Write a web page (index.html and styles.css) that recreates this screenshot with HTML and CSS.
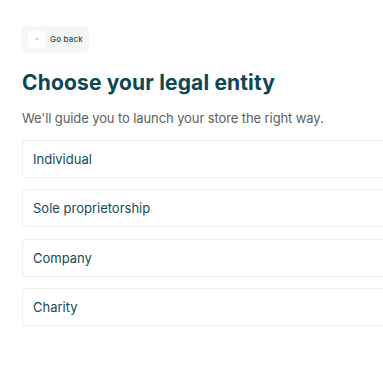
FILE: index.html
```html
<!DOCTYPE html>
<html lang="en">
<head>
  <meta charset="UTF-8">
  <title>Legal entity</title>
  <link rel="stylesheet" href="styles.css">
</head>
<body>
  <div class="page">
    <div class="back">
      <span class="back-icon">
        <svg width="6" height="4" viewBox="0 0 6 4"><path d="M1 3.2 L3 1.2 L5 3.2" fill="none" stroke="#9aa3a6" stroke-width="0.9"/></svg>
      </span>
      <span class="back-text">Go back</span>
    </div>
    <h1 class="title">Choose your legal entity</h1>
    <p class="desc">We'll guide you to launch your store the right way.</p>
    <div class="list">
      <div class="item">Individual</div>
      <div class="item">Sole proprietorship</div>
      <div class="item">Company</div>
      <div class="item">Charity</div>
    </div>
  </div>
</body>
</html>
```

FILE: styles.css
```css
*{margin: 0;box-sizing: border-box;}
body{
  font-family: Inter, "Noto Sans", sans-serif;
  background: #fff;
  overflow: hidden;
}
.page{
  padding: 25px 0 0 22px;
  width: 420px;
}
.back{
  display: inline-flex;
  align-items: center;
  gap: 5px;
  height: 27px;
  padding: 0 6px 0 6px;
  background: #f5f7f7;
  border-radius: 5px;
}
.back-icon{
  width: 17px;
  height: 17px;
  background: #fff;
  border-radius: 3px;
  display: flex;
  align-items: center;
  justify-content: center;
}
.back-text{
  font-size: 8px;
  font-weight: 500;
  letter-spacing: 0.2px;
  color: #1b4d57;
}
.title{
  margin-top: 16px;
  font-size: 21px;
  line-height: 28px;
  font-weight: 700;
  letter-spacing: 0.15px;
  color: #0c4752;
}
.desc{
  margin-top: 13px;
  font-size: 13px;
  line-height: 17px;
  letter-spacing: -0.1px;
  color: #5c5f60;
}
.list{
  margin-top: 13px;
  display: flex;
  flex-direction: column;
  gap: 11.5px;
}
.item{
  height: 38px;
  display: flex;
  align-items: center;
  padding-left: 10px;
  border: 1px solid #eeeeee;
  border-radius: 3px;
  font-size: 13px;
  color: #124a55;
}
```
